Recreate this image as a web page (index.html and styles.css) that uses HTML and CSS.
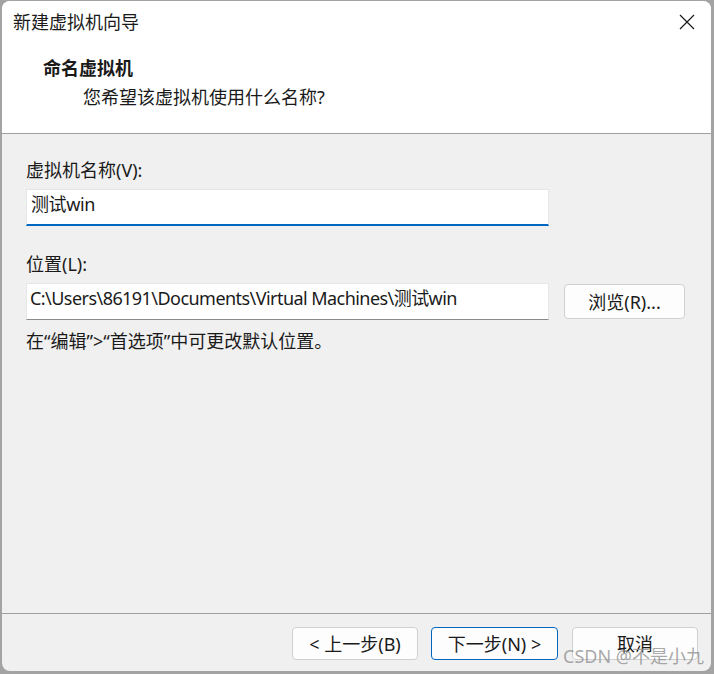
FILE: index.html
```html
<!DOCTYPE html>
<html lang="zh-CN">
<head>
<meta charset="utf-8">
<title>新建虚拟机向导</title>
<link rel="stylesheet" href="styles.css">
</head>
<body>
<div class="window">
  <div class="header">
    <div class="titlebar">
      <span class="title">新建虚拟机向导</span>
      <span class="close" aria-label="关闭">
        <svg width="16" height="16" viewBox="0 0 16 16"><path d="M1 1 L15 15 M15 1 L1 15" stroke="#1a1a1a" stroke-width="1.2" fill="none"/></svg>
      </span>
    </div>
    <div class="head-text">
      <div class="h1">命名虚拟机</div>
      <div class="h2">您希望该虚拟机使用什么名称?</div>
    </div>
  </div>
  <div class="body">
    <div class="label">虚拟机名称(V):</div>
    <div class="input focused">测试win</div>
    <div class="label second">位置(L):</div>
    <div class="row">
      <div class="input path">C:\Users\86191\Documents\Virtual Machines\测试win</div>
      <div class="btn browse">浏览(R)...</div>
    </div>
    <div class="hint">在“编辑”&gt;“首选项”中可更改默认位置。</div>
  </div>
  <div class="footer">
    <div class="btn">&lt; 上一步(B)</div>
    <div class="btn primary">下一步(N) &gt;</div>
    <div class="btn">取消</div>
  </div>
  <div class="watermark">CSDN @不是小九</div>
</div>
</body>
</html>
```
FILE: styles.css
```css
* { box-sizing: border-box; }
html, body { margin: 0; padding: 0; }
body {
  width: 714px;
  height: 674px;
  background: #a3a3a3;
  font-family: "Noto Sans", "Noto Sans CJK SC", sans-serif;
  font-size: 18px;
  color: #1a1a1a;
  overflow: hidden;
}
.window {
  position: relative;
  margin: 1px 0 0 2px;
  width: 709px;
  height: 670px;
  background: #f0f0f0;
  border-radius: 8px;
  overflow: hidden;
  display: flex;
  flex-direction: column;
}
.header {
  background: #fff;
  height: 133px;
  border-bottom: 1px solid #a0a0a0;
  flex: none;
}
.titlebar {
  height: 42px;
  display: flex;
  align-items: center;
  justify-content: space-between;
  padding: 0 16px 0 11px;
}
.title { line-height: 26px; }
.close { display: flex; width: 16px; height: 16px; }
.head-text { padding: 12px 0 0 41px; }
.h1 { font-weight: 700; line-height: 26px; }
.h2 { line-height: 26px; margin-top: 3px; padding-left: 40px; }
.body {
  flex: 1;
  padding: 24px 0 0 24px;
}
.label { line-height: 24px; }
.label.second { margin-top: 26px; }
.input {
  margin-top: 7px;
  width: 523px;
  height: 37px;
  background: #fff;
  border: 1px solid #e6e6e6;
  border-bottom: 1px solid #8a8a8a;
  padding: 0 4px;
  line-height: 28px;
  white-space: nowrap;
  overflow: hidden;
  letter-spacing: -0.4px;
}
.input.path { letter-spacing: -0.55px; padding-left: 3px; }
.input.focused { border-bottom: 2px solid #0067c0; }
.row { display: flex; align-items: center; gap: 15px; margin-top: 7px; }
.row .input { margin-top: 0; }
.btn {
  height: 35px;
  width: 121px;
  background: #fdfdfd;
  border: 1px solid #d0d0d0;
  border-radius: 4px;
  display: flex;
  align-items: center;
  justify-content: center;
  line-height: 24px;
}
.hint { margin-top: 9px; line-height: 24px; }
.footer {
  flex: none;
  height: 58px;
  border-top: 1px solid #a0a0a0;
  display: flex;
  justify-content: flex-end;
  align-items: flex-start;
  padding: 13px 13px 0 0;
  gap: 13px;
}
.footer .btn { width: 126px; height: 33px; }
.footer .btn.primary { width: 127px; border-color: #0067c0; margin-right: 1px; }
.watermark {
  position: absolute;
  left: 561px;
  top: 643px;
  font-size: 18px;
  line-height: 24px;
  color: rgba(140, 140, 140, 0.75);
  white-space: nowrap;
}
```
